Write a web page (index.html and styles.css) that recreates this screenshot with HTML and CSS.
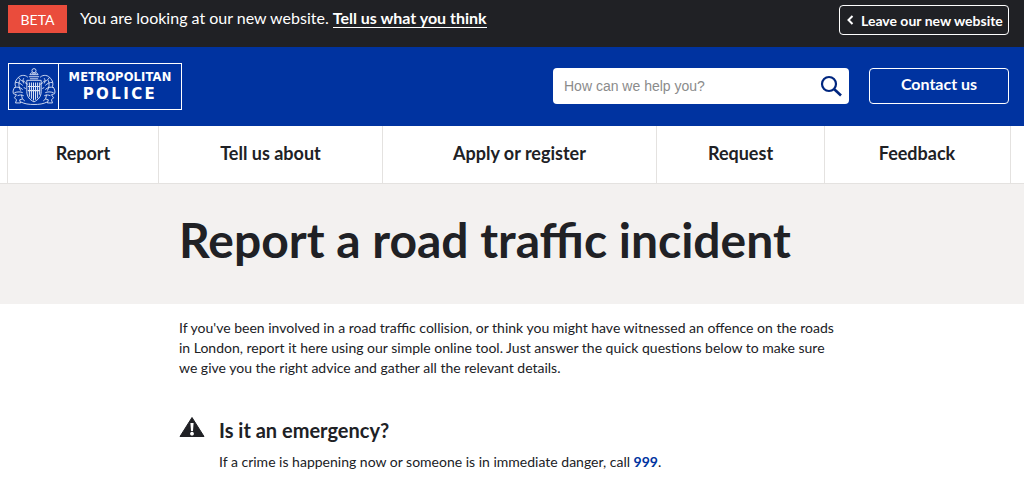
FILE: index.html
```html
<!DOCTYPE html>
<html lang="en">
<head>
<meta charset="utf-8">
<title>Report a road traffic incident</title>
<link rel="stylesheet" href="styles.css">
</head>
<body>
<div class="beta-bar">
  <div class="beta-left">
    <span class="beta-tag">BETA</span>
    <span class="beta-text">You are looking at our new website. <a href="#" class="beta-link">Tell us what you think</a></span>
  </div>
  <a href="#" class="leave-btn">
    <svg class="leave-icon" width="7" height="10" viewBox="0 0 7 10"><path d="M5.5 1 L1.5 5 L5.5 9" fill="none" stroke="#fff" stroke-width="2"/></svg>
    Leave our new website
  </a>
</div>
<header class="site-header">
  <a href="#" class="logo">
    <span class="logo-crest">
      <svg width="44" height="37" viewBox="0 0 42 36" fill="none" stroke="#dbe3f5" stroke-width="0.9">
        <g id="crest-side">
          <path d="M15 9c-3-3-8-2-10 1-2 2-3 5-2 8-2 2-3 5-2 7l3 1-2 3 2 2-1 3h5l-1-3 3-1"/>
          <path d="M6 9c1 3 4 4 6 4M3 14c3 0 5 1 7 3M2 19c3-1 6 0 8 2M2 24c3-1 6-1 8 0M5 27c2-1 4-1 6 0M7 12c-1 3-1 7 1 10M11 10c-1 2-1 3 0 5"/>
          <path d="M9 26c0 3 1 5 3 6M12 14l3 2M11 19l2 1"/>
          <path d="M8 33c4 2 8 2.500 13 2.500"/>
        </g>
        <use href="#crest-side" transform="matrix(-1 0 0 1 42 0)"/>
        <circle cx="21" cy="2.600" r="2"/>
        <path d="M17 6.500l1.500-2 2.500 1.500 2.500-1.500 1.500 2zM16 8.500h10M17 10.500h8"/>
        <path d="M14 12h14v11c0 5-3 8-7 10-4-2-7-5-7-10z"/>
        <path d="M16.500 14v14M18.500 14v16M20.500 14v17.500M22.500 14v17M24.500 14v15.500M26.500 14v12M15 18h12M15 22h12" stroke-width="1"/>
      </svg>
    </span>
    <span class="logo-words">
      <span class="logo-met">METROPOLITAN</span>
      <span class="logo-police">POLICE</span>
    </span>
  </a>
  <div class="header-actions">
    <div class="search">
      <span class="search-placeholder">How can we help you?</span>
      <svg class="search-icon" width="22" height="22" viewBox="0 0 22 22" fill="none" stroke="#00267f"><circle cx="9" cy="9" r="7" stroke-width="2.2"/><path d="M14 14l7 6.500" stroke-width="2.600"/></svg>
    </div>
    <a href="#" class="contact-btn">Contact us</a>
  </div>
</header>
<nav class="main-nav">
  <a href="#" class="nav-item nav-report">Report</a>
  <a href="#" class="nav-item nav-tell">Tell us about</a>
  <a href="#" class="nav-item nav-apply">Apply or register</a>
  <a href="#" class="nav-item nav-request">Request</a>
  <a href="#" class="nav-item nav-feedback">Feedback</a>
</nav>
<section class="hero">
  <h1 class="hero-title">Report a road traffic incident</h1>
</section>
<main class="content">
  <p class="intro">If you've been involved in a road traffic collision, or think you might have witnessed an offence on the roads in London, report it here using our simple online tool. Just answer the quick questions below to make sure we give you the right advice and gather all the relevant details.</p>
  <div class="notice">
    <svg class="notice-icon" width="26" height="22" viewBox="0 0 26 22"><path fill-rule="evenodd" fill="#202125" stroke="#202125" stroke-width="1" stroke-linejoin="round" d="M13 1.500 L25 20.500 H1 Z"/><path fill="#fff" d="M11.400 7 L12 15 H14 L14.600 7 Z M13 15.800 a1.900 1.900 0 1 0 0.010 0 Z"/></svg>
    <div class="notice-body">
      <h2 class="notice-title">Is it an emergency?</h2>
      <p class="notice-text">If a crime is happening now or someone is in immediate danger, call <a href="#" class="phone">999</a>.</p>
    </div>
  </div>
</main>
</body>
</html>
```
FILE: styles.css
```css
* { box-sizing: border-box; }
html, body { margin: 0; padding: 0; }
body { font-family: Lato, "Liberation Sans", sans-serif; color: #202125; background: #fff; overflow: hidden; height: 490px; }
a { color: inherit; text-decoration: none; }
h1, h2, p { margin: 0; }

.beta-bar { height: 47px; background: #202125; display: flex; justify-content: space-between; align-items: flex-start; padding: 5px 15px 0 8px; color: #fff; }
.beta-left { display: flex; align-items: flex-start; gap: 13px; }
.beta-tag { width: 59px; height: 28px; background: #ea4c3c; display: flex; align-items: center; justify-content: center; font-size: 14px; }
.beta-text { font-size: 16px; line-height: 26px; }
.beta-link { font-weight: 700; border-bottom: 1px solid #fff; }
.leave-btn { width: 170px; height: 30px; border: 1px solid #fff; border-radius: 4px; display: flex; align-items: center; gap: 7px; padding-left: 7px; font-size: 14px; font-weight: 700; white-space: nowrap; }

.site-header { height: 79px; background: #0033a0; display: flex; justify-content: space-between; padding: 16px 15px 0 8px; }
.logo { width: 174px; height: 47px; border: 1px solid #fff; display: flex; color: #fff; }
.logo-crest { width: 50px; border-right: 1px solid #fff; display: flex; align-items: center; justify-content: center; }
.logo-words { flex: 1; display: flex; flex-direction: column; align-items: center; font-weight: 700; padding-top: 6px; font-family: "DejaVu Sans", sans-serif; }
.logo-met { font-size: 11.5px; line-height: 15px; letter-spacing: 0.15px; }
.logo-police { font-size: 15px; line-height: 18px; letter-spacing: 2.4px; }
.header-actions { display: flex; gap: 20px; padding-top: 5px; }
.search { width: 296px; height: 36px; background: #fff; border-radius: 4px; display: flex; align-items: center; justify-content: space-between; padding: 0 7px 0 11px; }
.search-placeholder { font-family: "Liberation Sans", Arial, sans-serif; font-size: 14px; color: #8b8b8b; }
.contact-btn { width: 140px; height: 36px; border: 1px solid #fff; border-radius: 4px; color: #fff; display: flex; align-items: center; justify-content: center; font-size: 16px; font-weight: 700; padding-bottom: 5px; }

.main-nav { height: 58px; padding: 0 13px 0 7px; display: flex; border-bottom: 1px solid #e4e2e0; }
.nav-item { display: flex; align-items: center; justify-content: center; font-size: 18px; font-weight: 700; border-left: 1px solid #e4e2e0; padding-bottom: 4px; }
.nav-item:last-child { border-right: 1px solid #e4e2e0; padding-right: 1px; }
.nav-report { width: 151px; }
.nav-tell { width: 224px; }
.nav-apply { width: 274px; }
.nav-request { width: 168px; }
.nav-feedback { width: 187px; }

.hero { height: 120px; background: #f3f1f0; padding: 0 179px 8px; display: flex; align-items: center; }
.hero-title { font-size: 48px; font-weight: 700; line-height: 1.2; white-space: nowrap; }

.content { padding: 14px 179px 0; }
.intro { font-size: 14px; line-height: 20px; width: 665px; }
.notice { display: flex; gap: 14px; margin-top: 37px; }
.notice-icon { margin-top: 1px; flex: none; }
.notice-title { font-size: 20px; font-weight: 700; line-height: 30px; }
.notice-text { font-size: 14px; line-height: 20px; margin-top: 7px; }
.phone { color: #0033a0; font-weight: 700; }
```
